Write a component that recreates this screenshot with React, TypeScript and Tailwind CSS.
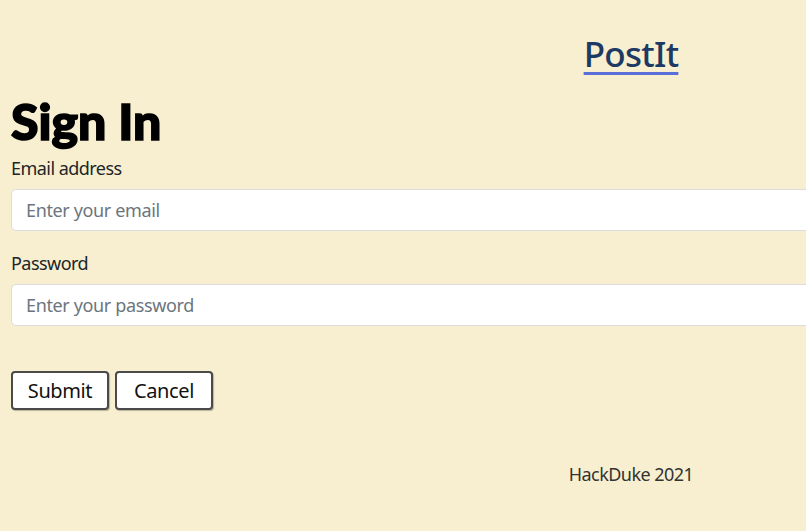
export default function App() {
  return (
    <div className="min-h-[531px] w-[1262px] bg-[#f7efcf] font-['Noto_Sans',sans-serif] text-[#212529]">
      {/* Header */}
      <header className="flex justify-center pt-[28px] h-[90px]">
        <a
          href="#"
          className="text-[35px] leading-[52px] font-medium tracking-[-0.02em] text-[#1e3a64] underline decoration-[#5a6fd8] decoration-[3px] underline-offset-[5px]"
        >
          PostIt
        </a>
      </header>

      {/* Form */}
      <main className="px-[11px]">
        <h1 className="font-['Lato',sans-serif] text-[50px] leading-[62px] font-black text-black [-webkit-text-stroke:1.6px_black]">
          Sign In
        </h1>
        <form className="flex flex-col mt-[2px]">
          <label className="text-[18px] leading-[28px] tracking-[-0.03em] mb-[7px]">Email address</label>
          <input
            type="email"
            placeholder="Enter your email"
            className="h-[42px] w-full rounded-[5px] border border-[#dcdcdc] bg-white px-[14px] text-[18px] tracking-[-0.02em] placeholder:text-[#6c757d] outline-none"
          />
          <label className="text-[18px] leading-[28px] tracking-[-0.03em] mt-[18px] mb-[7px]">Password</label>
          <input
            type="password"
            placeholder="Enter your password"
            className="h-[42px] w-full rounded-[5px] border border-[#dcdcdc] bg-white px-[14px] text-[18px] tracking-[-0.02em] placeholder:text-[#6c757d] outline-none"
          />
          <div className="flex gap-[6px] mt-[45px]">
            <button
              type="button"
              className="w-[98px] h-[39px] rounded-[4px] border-2 border-[#4a4a4a] bg-white text-[20px] tracking-[-0.02em] text-[#111] shadow-[1px_1px_1px_rgba(0,0,0,0.25)]"
            >
              Submit
            </button>
            <button
              type="button"
              className="w-[98px] h-[39px] rounded-[4px] border-2 border-[#4a4a4a] bg-white text-[20px] tracking-[-0.02em] text-[#111] shadow-[1px_1px_1px_rgba(0,0,0,0.25)]"
            >
              Cancel
            </button>
          </div>
        </form>
      </main>

      {/* Footer */}
      <footer className="flex justify-center mt-[50px] pb-[40px]">
        <span className="text-[18px] leading-[28px] tracking-[-0.03em] text-[#333]">HackDuke 2021</span>
      </footer>
    </div>
  );
}
